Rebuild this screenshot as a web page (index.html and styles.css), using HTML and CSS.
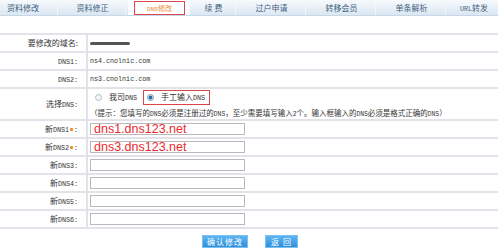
FILE: index.html
```html
<!DOCTYPE html>
<html lang="zh">
<head>
<meta charset="utf-8">
<title>DNS修改</title>
<link rel="stylesheet" href="styles.css">
</head>
<body>
<div class="tabs">
  <div class="tab t1">资料修改</div>
  <div class="tab t2">资料修正</div>
  <div class="tab t3 active"><span class="box"><span class="lat">DNS</span>修改</span></div>
  <div class="tab t4">续 费</div>
  <div class="tab t5">过户申请</div>
  <div class="tab t6">转移会员</div>
  <div class="tab t7">单条解析</div>
  <div class="tab t8"><span class="lat">URL</span>转发</div>
</div>
<div class="form">
  <div class="row"><div class="lab">要修改的域名:</div><div class="val"><span class="blur"></span></div></div>
  <div class="row"><div class="lab"><span class="lat">DNS1:</span></div><div class="val"><span class="lat">ns4.cnolnic.com</span></div></div>
  <div class="row"><div class="lab"><span class="lat">DNS2:</span></div><div class="val"><span class="lat">ns3.cnolnic.com</span></div></div>
  <div class="row sel">
    <div class="lab">选择<span class="lat">DNS:</span></div>
    <div class="val col">
      <div class="choices">
        <span class="opt"><span class="radio"></span><span class="txt">我司<span class="lat">DNS</span></span></span>
        <span class="opt picked"><span class="radio on"></span><span class="txt">手工输入<span class="lat">DNS</span></span></span>
      </div>
      <div class="tip">（提示：您填写的<span class="lat">DNS</span>必须是注册过的<span class="lat">DNS</span>，至少需要填写输入<span class="lat">2</span>个。输入框输入的<span class="lat">DNS</span>必须是格式正确的<span class="lat">DNS</span>）</div>
    </div>
  </div>
  <div class="row"><div class="lab">新<span class="lat">DNS1</span><span class="star"></span><span class="lat">:</span></div><div class="val"><input class="field red" type="text" value="dns1.dns123.net"></div></div>
  <div class="row"><div class="lab">新<span class="lat">DNS2</span><span class="star"></span><span class="lat">:</span></div><div class="val"><input class="field red" type="text" value="dns3.dns123.net"></div></div>
  <div class="row"><div class="lab">新<span class="lat">DNS3:</span></div><div class="val"><input class="field" type="text"></div></div>
  <div class="row"><div class="lab">新<span class="lat">DNS4:</span></div><div class="val"><input class="field" type="text"></div></div>
  <div class="row"><div class="lab">新<span class="lat">DNS5:</span></div><div class="val"><input class="field" type="text"></div></div>
  <div class="row last"><div class="lab">新<span class="lat">DNS6:</span></div><div class="val"><input class="field" type="text"></div></div>
</div>
<div class="actions">
  <button class="btn b1" type="button">确认修改</button>
  <button class="btn b2" type="button">返 回</button>
</div>
</body>
</html>
```
FILE: styles.css
```css
* { box-sizing: border-box; }
html, body { margin: 0; padding: 0; background: #fff; }
body {
  width: 498px;
  height: 251px;
  overflow: hidden;
  font-family: "Noto Sans CJK SC", "Liberation Sans", sans-serif;
  font-size: 8px;
  color: #333;
}
.lat {
  font-family: "Liberation Mono", "DejaVu Sans Mono", monospace;
  font-size: 6.7px;
}
.tabs {
  display: flex;
  gap: 2px;
  height: 16px;
  background: linear-gradient(#f7fafd, #dbe7f2);
  border-bottom: 1px solid #c6d7e8;
}
.tab {
  text-align: center;
  line-height: 15px;
  color: #3f5f80;
  border-right: 1px solid #f4f8fc;
  white-space: nowrap;
}
.t1 { width: 58px; text-align: left; padding-left: 7px; }
.t2 { width: 66px; }
.t3 { width: 62px; }
.t4 { width: 44px; }
.t5 { width: 68px; }
.t6 { width: 68px; }
.t7 { width: 68px; }
.t8 { flex: 1; text-align: right; padding-right: 10px; border-right: none; }
.tab.active {
  background: #fff;
  padding: 1px 4px 0 6px;
}
.box {
  display: block;
  height: 14px;
  line-height: 12px;
  text-align: center;
  border: 1px solid #d9474d;
  color: #f0882c;
  font-size: 7px;
}
.box .lat { font-size: 6px; }
.form { margin-top: 17px; }
.row {
  display: flex;
  height: 18px;
  border-top: 2px solid #e2e3e8;
}
.row.last { height: 20px; border-bottom: 2px solid #e2e3e8; }
.row.sel { height: 32px; }
.lab {
  width: 88px;
  flex: none;
  text-align: right;
  line-height: 16px;
  padding-right: 8px;
  border-right: 2px solid #e2e3e8;
  white-space: nowrap;
}
.sel .lab { line-height: 30px; }
.val {
  flex: 1;
  display: flex;
  align-items: center;
  padding-left: 2px;
  white-space: nowrap;
}
.val.col {
  flex-direction: column;
  align-items: flex-start;
  justify-content: flex-start;
  padding-top: 1px;
}
.blur {
  width: 40px;
  height: 3px;
  border-radius: 2px;
  background: #555;
  filter: blur(0.6px);
}
.choices {
  display: flex;
  align-items: center;
  height: 15px;
  gap: 6px;
}
.opt {
  display: flex;
  align-items: center;
  height: 15px;
  gap: 7px;
  padding-left: 5px;
}
.opt.picked {
  border: 1px solid #d9474d;
  padding: 0 3px 0 3px;
  width: 67px;
}
.txt { line-height: 13px; }
.radio {
  width: 7px;
  height: 7px;
  border-radius: 50%;
  border: 1px solid #b8bcc4;
  background: radial-gradient(circle, #fff 0, #e6e8ec 100%);
  flex: none;
}
.radio.on {
  background: radial-gradient(circle, #1f6fb8 0, #1f6fb8 1.6px, #d8e4f0 2.2px, #f4f6f9 100%);
  border-color: #8a97a8;
}
.tip { margin-top: 2px; line-height: 12px; font-size: 7.5px; }
.tip .lat { font-size: 6.3px; }
.star {
  display: inline-block;
  width: 3px;
  height: 3px;
  margin: 0 1px 1px 1px;
  border-radius: 1px;
  background: #f08a24;
  vertical-align: middle;
}
.field {
  width: 155px;
  height: 12px;
  margin: 0;
  padding: 0 0 0 3px;
  border: 1px solid #b9b9b9;
  background: #fff;
  font-family: "Liberation Sans", Arial, sans-serif;
  font-size: 12.5px;
  line-height: 10px;
  outline: none;
}
.field.red { color: #ea2a30; }
.actions {
  display: flex;
  justify-content: center;
  gap: 17px;
  margin-top: 6px;
  padding-left: 2px;
}
.btn {
  height: 13px;
  padding: 0;
  border: 1px solid #7cc0f0;
  background: linear-gradient(#5db5f2, #2d8fdc);
  color: #fff;
  font-family: "Noto Sans CJK SC", sans-serif;
  font-size: 8px;
  line-height: 1;
  letter-spacing: 1px;
}
.b1 { width: 46px; }
.b2 { width: 33px; }
```
